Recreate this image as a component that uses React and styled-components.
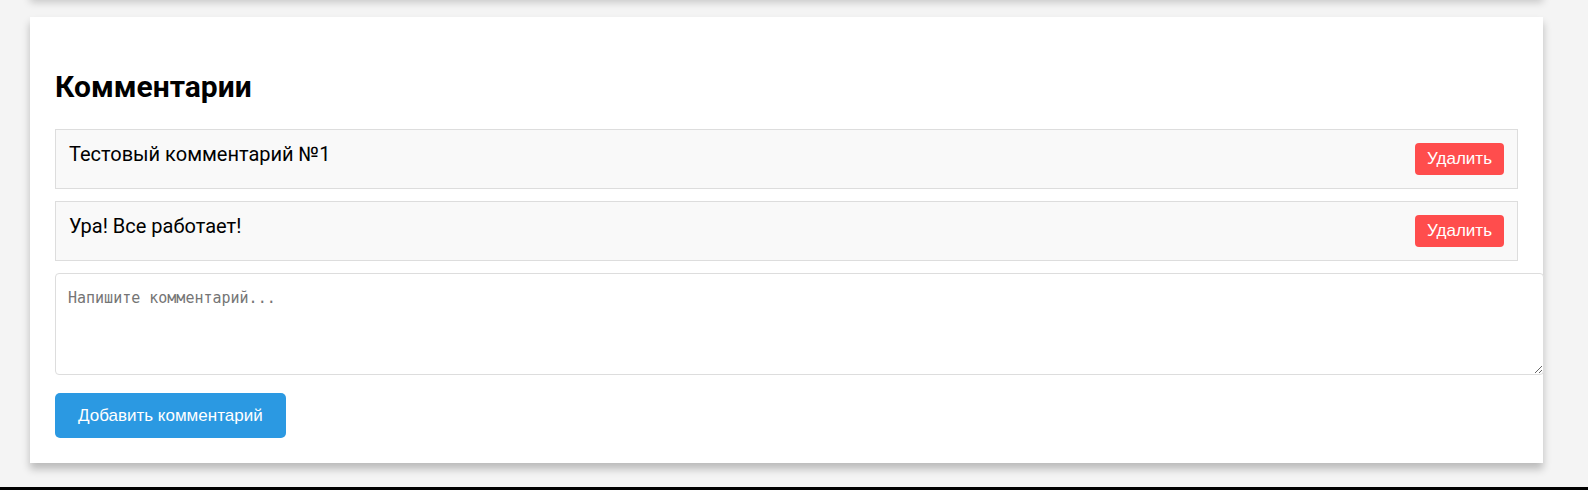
import React, {useState} from 'react';
import styled, {createGlobalStyle} from 'styled-components';

const GlobalStyle = createGlobalStyle`
  html, body {
    margin: 0;
    padding: 0;
    background: #f4f4f4;
    font-family: Roboto, "Noto Sans", Arial, sans-serif;
    overflow: hidden;
  }
`;

export default function App() {
  const [comments, setComments] = useState([
    {id: 1, text: 'Тестовый комментарий №1'},
    {id: 2, text: 'Ура! Все работает!'},
  ]);
  const [draft, setDraft] = useState('');

  const addComment = () => {
    if (draft.trim() === '') {
      return;
    }
    setComments([...comments, {id: Date.now(), text: draft}]);
    setDraft('');
  };

  const removeComment = id => setComments(comments.filter(c => c.id !== id));

  return (
    <>
      <GlobalStyle/>
      <Column>
        <PrevCard/>

        <Card>
          <Title>Комментарии</Title>

          {comments.map(comment =>
            <CommentRow key={comment.id}>
              <CommentText>{comment.text}</CommentText>
              <DeleteButton onClick={() => removeComment(comment.id)}>Удалить</DeleteButton>
            </CommentRow>
          )}

          <CommentInput placeholder="Напишите комментарий..."
                        value={draft}
                        onChange={e => setDraft(e.target.value)}/>

          <AddButton onClick={addComment}>Добавить комментарий</AddButton>
        </Card>
      </Column>

      <Footer/>
    </>
  );
}

const Column = styled.div`
  display: flex;
  flex-direction: column;
  padding-left: 30px;
  width: 1513px;
`;

const PrevCard = styled.div`
  height: 100px;
  margin-top: -103px;
  margin-bottom: 20px;
  background: #fff;
  box-shadow: 0 5px 8px rgba(0, 0, 0, 0.2);
`;

const Card = styled.section`
  display: flex;
  flex-direction: column;
  background: #fff;
  padding: 25px;
  box-shadow: 0 6px 8px rgba(0, 0, 0, 0.24);
`;

const Title = styled.h2`
  margin: 27px 0 25px;
  font-size: 30px;
  font-weight: 700;
  color: #000;
`;

const CommentRow = styled.div`
  display: flex;
  justify-content: space-between;
  align-items: flex-start;
  padding: 13px;
  margin-bottom: 12px;
  background: #f9f9f9;
  border: 1px solid #ddd;
`;

const CommentText = styled.span`
  font-size: 20px;
  line-height: 23px;
  color: #000;
`;

const DeleteButton = styled.button`
  height: 32px;
  padding: 0 12px;
  border: none;
  border-radius: 4px;
  background: #ff4d4d;
  color: #fff;
  font-family: "Liberation Sans", Arial, sans-serif;
  font-size: 17px;
  cursor: pointer;
`;

const CommentInput = styled.textarea`
  display: block;
  box-sizing: content-box;
  width: 100%;
  height: 70px;
  padding: 15px 12px;
  border: 1px solid #ddd;
  border-radius: 4px;
  font-family: "DejaVu Sans Mono", monospace;
  font-size: 15px;
  color: #000;
  resize: vertical;

  &::placeholder {
    color: #757575;
  }
`;

const AddButton = styled.button`
  align-self: flex-start;
  height: 45px;
  margin-top: 18px;
  padding: 0 23px;
  border: none;
  border-radius: 5px;
  background: #2b99e2;
  color: #fff;
  font-family: "Liberation Sans", Arial, sans-serif;
  font-size: 17px;
  cursor: pointer;
`;

const Footer = styled.div`
  height: 3px;
  margin-top: 24px;
  background: #000;
`;
